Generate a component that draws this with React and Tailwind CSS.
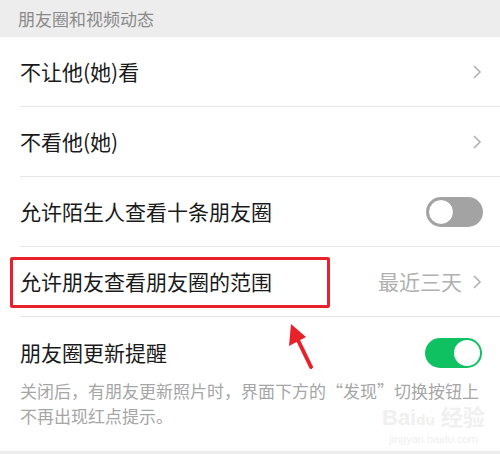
import React from 'react';

const font = { fontFamily: '"Noto Sans CJK SC", "Noto Sans", sans-serif' };

const Chevron = () => (
  <svg width="10" height="16" viewBox="0 0 10 16" className="shrink-0">
    <polyline points="2,2 8,8 2,14" fill="none" stroke="#b2b2b2" strokeWidth="1.6" />
  </svg>
);

const Toggle = ({ on }) =>
  on ? (
    <div className="w-[57px] h-[30px] rounded-full bg-[#0fc160] flex items-center justify-end pr-[2px]">
      <div className="w-[26px] h-[26px] rounded-full bg-white" />
    </div>
  ) : (
    <div className="w-[57px] h-[30px] rounded-full bg-[#a3a3a3] flex items-center pl-[2px]">
      <div className="w-[26px] h-[26px] rounded-full bg-white border border-[#9a9a9a]" />
    </div>
  );

const Row = ({ title, right, last, children }) => (
  <div className="relative h-[70px] pl-[20px]">
    <div className={`h-full flex items-center pr-[18px] ${last ? '' : 'border-b border-[#e6e6e6]'}`}>
      <span className="flex-1 text-[21px] text-[#1a1a1a]">{title}</span>
      {right}
    </div>
    {children}
  </div>
);

export default function App() {
  return (
    <div className="relative w-[500px] h-[454px] bg-[#ededed] overflow-hidden" style={font}>
      <div className="h-[37px] flex items-center pl-[18px] text-[17px] text-[#8a8a8a]">朋友圈和视频动态</div>
      <div className="bg-white">
        <Row title="不让他(她)看" right={<Chevron />} />
        <Row title="不看他(她)" right={<Chevron />} />
        <Row title="允许陌生人查看十条朋友圈" right={<div className="-mr-[1px]"><Toggle on={false} /></div>} />
        <Row
          title="允许朋友查看朋友圈的范围"
          right={
            <div className="flex items-center gap-[10px]">
              <span className="text-[21px] text-[#b0b0b0]">最近三天</span>
              <Chevron />
            </div>
          }
        >
          <div className="absolute left-[10px] top-[10px] w-[320px] h-[51px] border-[3px] border-[#e8212b] rounded-[2px]" />
        </Row>
        <div className="pl-[20px] pr-[18px] pt-[21px] pb-[23px]">
          <div className="h-[30px] flex items-center">
            <span className="flex-1 text-[21px] text-[#1a1a1a]">朋友圈更新提醒</span>
            <Toggle on />
          </div>
          <p className="mt-[10px] text-[17px] leading-[25px] text-[#a6a6a6] whitespace-nowrap">
            关闭后，有朋友更新照片时，界面下方的“发现”切换按钮上
            <br />
            不再出现红点提示。
          </p>
        </div>
      </div>

      {/* annotation arrow */}
      <svg className="absolute left-[280px] top-[318px]" width="40" height="56" viewBox="0 0 40 56">
        <line x1="31" y1="49" x2="16" y2="18" stroke="#e8212b" strokeWidth="4" strokeLinecap="round" />
        <polygon points="11,6 9,28 26,19" fill="#e8212b" />
      </svg>

      {/* watermark */}
      <div className="absolute left-[382px] top-[406px] flex flex-col items-center text-[#f0f0f0] pointer-events-none">
        <span className="text-[22px] font-bold leading-[24px]" style={{ fontFamily: '"Liberation Sans", "Noto Sans CJK SC", sans-serif' }}>Bai<span className="text-[15px]">du</span> 经验</span>
        <span className="text-[11px] leading-[14px]" style={{ fontFamily: '"Liberation Sans", sans-serif' }}>jingyan.baidu.com</span>
      </div>
    </div>
  );
}
